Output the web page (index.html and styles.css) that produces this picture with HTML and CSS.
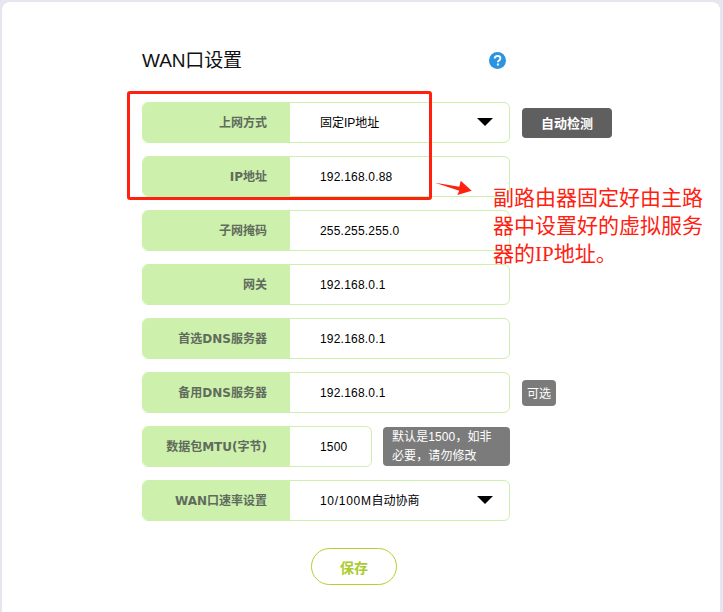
FILE: index.html
```html
<!DOCTYPE html>
<html lang="zh">
<head>
<meta charset="utf-8">
<title>WAN口设置</title>
<link rel="stylesheet" href="styles.css">
</head>
<body>
<main class="card">
  <div class="panel">
    <header class="head">
      <h1 class="title">WAN口设置</h1>
      <svg class="help" viewBox="0 0 17 17" width="17" height="17" aria-hidden="true"><circle cx="8.5" cy="8.5" r="8.5" fill="#2b93e0"/><path d="M5.7 6.6c0-1.7 1.2-2.6 2.9-2.6s2.800.9 2.800 2.300c0 2.100-2.500 2.100-2.500 4" fill="none" stroke="#fff" stroke-width="1.900"/><rect x="7.900" y="11.500" width="2" height="2" fill="#fff"/></svg>
    </header>
    <div class="rows">
      <div class="row">
        <div class="field"><span class="label">上网方式</span><span class="value">固定IP地址</span><i class="caret"></i></div>
        <button class="detect" type="button">自动检测</button>
      </div>
      <div class="row"><div class="field"><span class="label">IP地址</span><span class="value num">192.168.0.88</span></div></div>
      <div class="row"><div class="field"><span class="label">子网掩码</span><span class="value num">255.255.255.0</span></div></div>
      <div class="row"><div class="field"><span class="label">网关</span><span class="value num">192.168.0.1</span></div></div>
      <div class="row"><div class="field"><span class="label">首选DNS服务器</span><span class="value num">192.168.0.1</span></div></div>
      <div class="row">
        <div class="field"><span class="label">备用DNS服务器</span><span class="value num">192.168.0.1</span></div>
        <span class="optional">可选</span>
      </div>
      <div class="row">
        <div class="field narrow"><span class="label">数据包MTU(字节)</span><span class="value num">1500</span></div>
        <p class="hint">默认是1500，如非<br>必要，请勿修改</p>
      </div>
      <div class="row">
        <div class="field"><span class="label">WAN口速率设置</span><span class="value"><span class="wide">10/100M</span>自动协商</span><i class="caret"></i></div>
      </div>
    </div>
    <div class="actions"><button class="save" type="button">保存</button></div>
  </div>
</main>
<div class="mark-box"></div>
<svg class="mark-arrow" viewBox="0 0 40 16" width="40" height="16" aria-hidden="true"><path d="M1 2.700 L25.300 6.700 L26.700 .7 L37.700 10.700 L23.300 15 L25.300 10.700 Z" fill="#ff2010"/></svg>
<p class="mark-note">副路由器固定好由主路器中设置好的虚拟服务器的IP地址。</p>
</body>
</html>
```
FILE: styles.css
```css
* { box-sizing: border-box; }
html, body { height: 100%; }
body {
  margin: 0;
  padding: 2px 3px 0 2px;
  background: #e6e6f0;
  overflow: hidden;
  font-family: "Liberation Sans", "Noto Sans CJK SC", sans-serif;
  font-size: 12px;
  color: #000;
}
.card {
  background: #fff;
  border-radius: 8px 8px 0 0;
  height: 100%;
  padding: 0 0 0 140px;
}
.panel { width: 470px; }
.head {
  display: flex;
  align-items: center;
  height: 100px;
  padding-top: 17px;
  width: 364px;
  justify-content: space-between;
}
.title {
  margin: 0;
  font-size: 19px;
  font-weight: 400;
  color: #111;
  line-height: 24px;
  letter-spacing: -0.1px;
}
.rows { display: flex; flex-direction: column; gap: 13px; }
.row { display: flex; align-items: center; gap: 12px; height: 41px; }
.field {
  position: relative;
  display: flex;
  align-items: center;
  width: 368px;
  height: 41px;
  border: 1px solid #cdf0ac;
  border-radius: 6px;
  overflow: hidden;
  background: #fff;
}
.field.narrow { width: 230px; }
.label {
  flex: 0 0 147px;
  height: 100%;
  background: #cdf0ac;
  color: #5f6b5c;
  font-family: "DejaVu Sans", "Noto Sans CJK SC", sans-serif;
  font-weight: 700;
  line-height: 41px;
  text-align: right;
  padding-right: 23px;
  white-space: nowrap;
}
.value { padding-left: 30px; padding-top: 2px; line-height: 39px; white-space: nowrap; }
.num { letter-spacing: 0.2px; }
.wide { letter-spacing: 0.7px; }
.caret {
  position: absolute;
  right: 16px;
  top: 15px;
  border-left: 8px solid transparent;
  border-right: 8px solid transparent;
  border-top: 8px solid #000;
}
.detect {
  width: 90px;
  height: 30px;
  padding: 0;
  border: 0;
  border-radius: 4px;
  background: #5f5f5f;
  color: #fff;
  font: 700 13px "Liberation Sans", "Noto Sans CJK SC", sans-serif;
}
.optional {
  width: 34px;
  height: 26px;
  border-radius: 4px;
  background: #7b7b7b;
  color: #fff;
  line-height: 28px;
  text-align: center;
}
.hint {
  width: 127px;
  height: 39px;
  margin: 0 0 0 -1px;
  padding: 1px 0 0 9px;
  border-radius: 4px;
  background: #7b7b7b;
  color: #fff;
  line-height: 19px;
  white-space: nowrap;
  font-family: "Liberation Sans", "Noto Sans CJK TC", sans-serif;
  letter-spacing: 0.1px;
}
.actions { width: 424px; display: flex; justify-content: center; padding-top: 27px; }
.save {
  width: 86px;
  height: 37px;
  padding: 0;
  background: #fff;
  border: 1px solid #b3d12a;
  border-radius: 19px;
  color: #abcb2e;
  font: 700 14px "Liberation Sans", "Noto Sans CJK SC", sans-serif;
}
.mark-box {
  position: absolute;
  left: 127px;
  top: 91px;
  width: 305px;
  height: 109px;
  border: 3px solid #ff2010;
  border-radius: 3px;
}
.mark-arrow { position: absolute; left: 434px; top: 180px; }
.mark-note {
  position: absolute;
  left: 493px;
  top: 184px;
  width: 216px;
  margin: 0;
  color: #ff2010;
  font-size: 21px;
  font-weight: 400;
  line-height: 28px;
  font-family: "Liberation Serif", "Noto Sans CJK SC", sans-serif;
}
```
